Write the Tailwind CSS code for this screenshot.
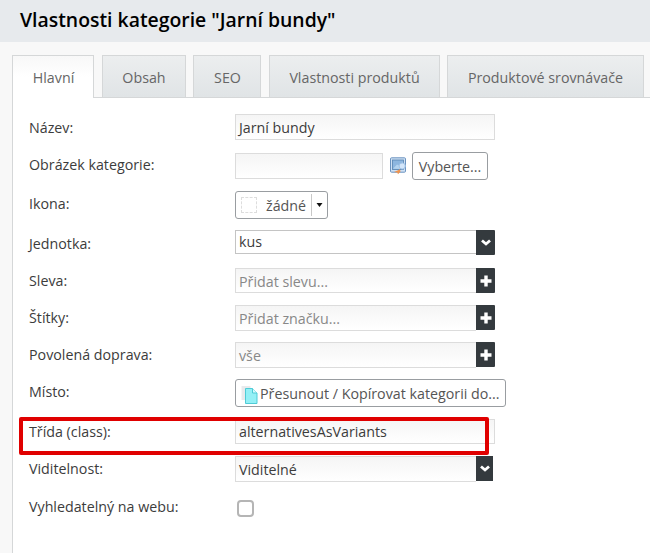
<!DOCTYPE html>
<html lang="cs">
<head>
<meta charset="utf-8">
<title>Vlastnosti kategorie</title>
<script src="https://cdn.jsdelivr.net/npm/@tailwindcss/browser@4"></script>
</head>
<body class="w-[650px] h-[553px] overflow-hidden bg-[#f8f8f8] font-['Open_Sans',sans-serif] text-[14.25px] text-[#3c3c3c] whitespace-nowrap">
<div class="flex flex-col h-[553px]">
  <header class="h-[42px] shrink-0 bg-[#e7eaed] pl-5 flex items-center">
    <h1 class="text-[19.4px] leading-[39px] h-[42px] font-semibold text-black">Vlastnosti kategorie "Jarní bundy"</h1>
  </header>
  <nav class="mt-[13px] h-[43px] shrink-0 flex pl-3 text-[#666] leading-[43px] text-center">
    <div class="w-[82px] border border-b-0 border-[#d5d7d8] bg-linear-to-b from-[#f8f8f8] to-white to-50% pl-px">Hlavní</div>
    <div class="w-2 border-b border-[#d5d7d8]"></div>
    <div class="w-[84px] border border-[#d5d7d8] bg-linear-to-b from-[#eceeef] to-[#e0e4e6]">Obsah</div>
    <div class="w-[7px] border-b border-[#d5d7d8]"></div>
    <div class="w-[68px] border border-[#d5d7d8] bg-linear-to-b from-[#eceeef] to-[#e0e4e6] pl-px">SEO</div>
    <div class="w-2 border-b border-[#d5d7d8]"></div>
    <div class="w-[171px] border border-[#d5d7d8] bg-linear-to-b from-[#eceeef] to-[#e0e4e6]">Vlastnosti produktů</div>
    <div class="w-[7px] border-b border-[#d5d7d8]"></div>
    <div class="w-[197px] border border-[#d5d7d8] bg-linear-to-b from-[#eceeef] to-[#e0e4e6]">Produktové srovnávače</div>
    <div class="flex-1 border-b border-[#d5d7d8]"></div>
  </nav>
  <main class="relative ml-3 flex-1 bg-white border-l border-[#d5d7d8] pt-4 pl-4 leading-[26px]">
    <div class="flex items-start h-[39px]">
      <label class="w-[206px] leading-[27px]">Název:</label>
      <div class="w-[260px] h-[26px] border border-[#dcdcdc] bg-linear-to-b from-[#f5f5f5] to-white pl-[3px] leading-[26px]">Jarní bundy</div>
    </div>
    <div class="flex items-start h-[38px]">
      <label class="w-[206px] leading-[24px]">Obrázek kategorie:</label>
      <div class="w-[148px] h-[26px] border border-[#dcdcdc] bg-linear-to-b from-[#f5f5f5] to-white"></div>
      <svg class="ml-[7px] mt-1 w-4 h-[18px]" viewBox="0 0 16 18">
        <rect x=".5" y=".8" width="15" height="14.4" rx="1" fill="#cfe1f4" stroke="#6b93c0"/>
        <rect x="2.5" y="3" width="11" height="9.5" fill="#8db6df" stroke="#5582b0" stroke-width=".8"/>
        <path d="M3 11.8 7 7.5 10 9 12.8 5v7z" fill="#b4d3ef"/>
        <circle cx="12.200" cy="9" r="3.100" fill="#d3e6fa" stroke="#9fc2e6"/>
        <path d="M4 15 7.500 13.500 10 12.200 10.500 14.500 8 17.200 7.300 15.600z" fill="#ee9450"/>
      </svg>
      <div class="ml-[6px] -mt-px w-[76px] h-7 border border-[#999da1] rounded-[3px] bg-white text-center leading-[28px] text-[#555]">Vyberte...</div>
    </div>
    <div class="flex items-start h-[39px]">
      <label class="w-[206px]">Ikona:</label>
      <div class="w-[93px] h-7 border border-[#999da1] rounded-[3px] bg-white flex items-center text-[#555] leading-[26px]">
        <div class="ml-[5px] size-4 border border-dashed border-[#ddd]"></div>
        <span class="ml-[9px] mt-px w-[45px]">žádné</span>
        <div class="w-px h-[22px] bg-[#c8c8c8]"></div>
        <svg class="ml-1 w-[7px] h-1" viewBox="0 0 7 4"><path d="M.5 0h6L3.500 4z" fill="#111"/></svg>
      </div>
    </div>
    <div class="flex items-start h-[38px]">
      <label class="w-[206px] leading-[27px]">Jednotka:</label>
      <div class="w-[241px] h-6 border border-r-0 border-[#c4c4c4] bg-white pl-[3px] leading-[22px]">kus</div>
      <div class="w-[19px] h-[25px] bg-[#343a3e] rounded-r-[1px] flex items-center justify-center"><svg class="w-[10px] h-[7px]" viewBox="0 0 10 7"><path d="M1 1.500 5 5 9 1.500" fill="none" stroke="#fff" stroke-width="2.800"/></svg></div>
    </div>
    <div class="flex items-start h-[37px]">
      <label class="w-[206px]">Sleva:</label>
      <div class="w-[241px] h-[25px] border border-r-0 border-[#dcdcdc] bg-linear-to-b from-[#f5f5f5] to-white pl-[3px] leading-[25px] text-[#888]">Přidat slevu...</div>
      <div class="w-[19px] h-[25px] bg-[#343a3e] rounded-r-[1px] flex items-center justify-center"><svg class="size-3" viewBox="0 0 12 12"><path d="M6 .5v11M.5 6h11" stroke="#fff" stroke-width="3.400"/></svg></div>
    </div>
    <div class="flex items-start h-[37px]">
      <label class="w-[206px]">Štítky:</label>
      <div class="w-[241px] h-[26px] border border-r-0 border-[#dcdcdc] bg-linear-to-b from-[#f5f5f5] to-white pl-[3px] leading-[25px] text-[#888]">Přidat značku...</div>
      <div class="w-[19px] h-[25px] bg-[#343a3e] rounded-r-[1px] flex items-center justify-center"><svg class="size-3" viewBox="0 0 12 12"><path d="M6 .5v11M.5 6h11" stroke="#fff" stroke-width="3.400"/></svg></div>
    </div>
    <div class="flex items-start h-[37px]">
      <label class="w-[206px]">Povolená doprava:</label>
      <div class="w-[241px] h-[26px] border border-r-0 border-[#dcdcdc] bg-linear-to-b from-[#f5f5f5] to-white pl-[3px] leading-[25px] text-[#888]">vše</div>
      <div class="w-[19px] h-[25px] bg-[#343a3e] rounded-r-[1px] flex items-center justify-center"><svg class="size-3" viewBox="0 0 12 12"><path d="M6 .5v11M.5 6h11" stroke="#fff" stroke-width="3.400"/></svg></div>
    </div>
    <div class="flex items-start h-10">
      <label class="w-[206px]">Místo:</label>
      <div class="w-[271px] h-7 border border-[#999da1] rounded-[3px] bg-white flex items-center text-[#555] leading-[28px]">
        <svg class="ml-[5px] mt-[3px] w-[17px] h-[18px]" viewBox="0 0 17 18">
          <path d="M.5 0h9v14h-9z" fill="#e8eaec"/>
          <path d="M4.500 2.500h7l4.500 4.500v10.500H4.500z" fill="#93f0f6" stroke="#4fcbd6"/>
          <path d="M11.500 2.500v4.500H16" fill="#d5fbfd" stroke="#4fcbd6"/>
        </svg>
        <span class="ml-[2px] mt-px">Přesunout / Kopírovat kategorii do...</span>
      </div>
    </div>
    <div class="relative flex items-start h-[37px]">
      <label class="w-[206px]">Třída (class):</label>
      <div class="w-[260px] h-[25px] border border-[#dcdcdc] bg-linear-to-b from-[#f5f5f5] to-white pl-[3px] leading-[24px]">alternativesAsVariants</div>
      <div class="absolute -left-[10px] -top-[2px] w-[470px] h-[38px] border-4 border-[#e00000] rounded-[2px]"></div>
    </div>
    <div class="flex items-start h-[37px]">
      <label class="w-[206px]">Viditelnost:</label>
      <div class="w-[241px] h-[26px] border border-r-0 border-[#dcdcdc] bg-linear-to-b from-[#f5f5f5] to-white pl-[3px] leading-[25px]">Viditelné</div>
      <div class="w-[17px] h-[25px] bg-[#343a3e] flex items-center justify-center"><svg class="w-[10px] h-[7px]" viewBox="0 0 10 7"><path d="M1 1.500 5 5 9 1.500" fill="none" stroke="#fff" stroke-width="2.800"/></svg></div>
    </div>
    <div class="flex items-start">
      <label class="w-[206px] leading-[27px]">Vyhledatelný na webu:</label>
      <div class="ml-[2px] mt-[7px] size-[17px] border-2 border-[#b5b5b5] rounded-[4px] bg-white"></div>
    </div>
  </main>
</div>
</body>
</html>
